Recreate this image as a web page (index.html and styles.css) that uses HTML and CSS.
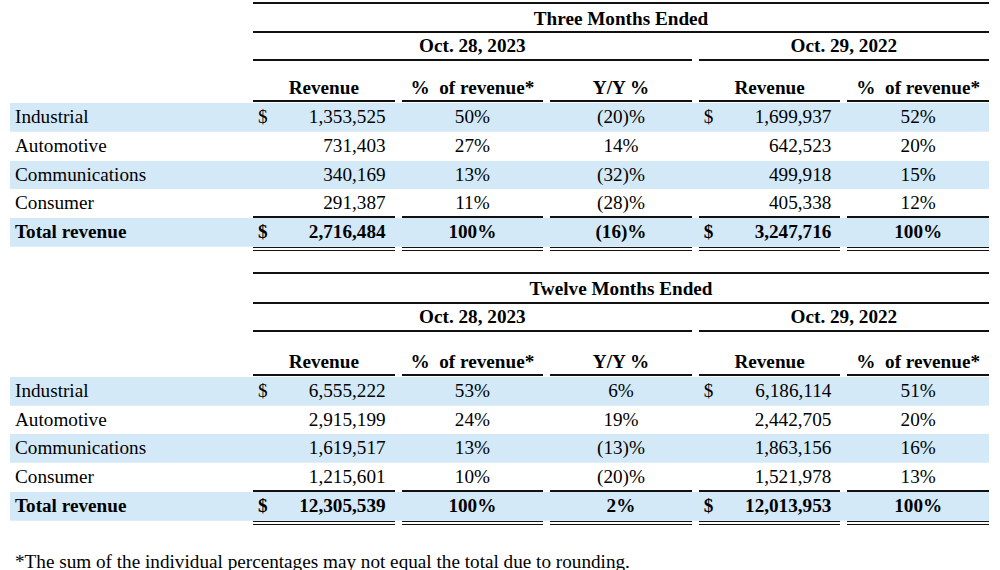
FILE: index.html
```html
<!DOCTYPE html>
<html lang="en">
<head>
<meta charset="utf-8">
<title>Revenue by End Market</title>
<link rel="stylesheet" href="styles.css">
</head>
<body>
<div class="sheet">
  <section class="block first">
    <div class="band"><div class="spacer"></div><div class="title">Three Months Ended</div></div>
    <div class="band"><div class="spacer"></div><div class="period p3">Oct. 28, 2023</div><div class="period p2">Oct. 29, 2022</div></div>
    <div class="band heads">
      <div class="spacer"></div>
      <div class="hd">Revenue</div><div class="hd">%&nbsp;&nbsp;of revenue*</div><div class="hd">Y/Y %</div><div class="hd">Revenue</div><div class="hd">%&nbsp;&nbsp;of revenue*</div>
    </div>
    <div class="rows">
      <div class="row alt"><div class="lbl">Industrial</div><div class="c money"><span>$</span><span>1,353,525</span></div><div class="c pct">50%</div><div class="c pct">(20)%</div><div class="c money"><span>$</span><span>1,699,937</span></div><div class="c pct">52%</div></div>
      <div class="row"><div class="lbl">Automotive</div><div class="c money"><span></span><span>731,403</span></div><div class="c pct">27%</div><div class="c pct">14%</div><div class="c money"><span></span><span>642,523</span></div><div class="c pct">20%</div></div>
      <div class="row alt"><div class="lbl">Communications</div><div class="c money"><span></span><span>340,169</span></div><div class="c pct">13%</div><div class="c pct">(32)%</div><div class="c money"><span></span><span>499,918</span></div><div class="c pct">15%</div></div>
      <div class="row under"><div class="lbl">Consumer</div><div class="c money"><span></span><span>291,387</span></div><div class="c pct">11%</div><div class="c pct">(28)%</div><div class="c money"><span></span><span>405,338</span></div><div class="c pct">12%</div></div>
      <div class="row total"><div class="lbl">Total revenue</div><div class="c money"><span>$</span><span>2,716,484</span></div><div class="c pct">100%</div><div class="c pct">(16)%</div><div class="c money"><span>$</span><span>3,247,716</span></div><div class="c pct">100%</div></div>
    </div>
  </section>

  <section class="block second">
    <div class="band"><div class="spacer"></div><div class="title">Twelve Months Ended</div></div>
    <div class="band"><div class="spacer"></div><div class="period p3">Oct. 28, 2023</div><div class="period p2">Oct. 29, 2022</div></div>
    <div class="band heads">
      <div class="spacer"></div>
      <div class="hd">Revenue</div><div class="hd">%&nbsp;&nbsp;of revenue*</div><div class="hd">Y/Y %</div><div class="hd">Revenue</div><div class="hd">%&nbsp;&nbsp;of revenue*</div>
    </div>
    <div class="rows">
      <div class="row alt"><div class="lbl">Industrial</div><div class="c money"><span>$</span><span>6,555,222</span></div><div class="c pct">53%</div><div class="c pct">6%</div><div class="c money"><span>$</span><span>6,186,114</span></div><div class="c pct">51%</div></div>
      <div class="row"><div class="lbl">Automotive</div><div class="c money"><span></span><span>2,915,199</span></div><div class="c pct">24%</div><div class="c pct">19%</div><div class="c money"><span></span><span>2,442,705</span></div><div class="c pct">20%</div></div>
      <div class="row alt"><div class="lbl">Communications</div><div class="c money"><span></span><span>1,619,517</span></div><div class="c pct">13%</div><div class="c pct">(13)%</div><div class="c money"><span></span><span>1,863,156</span></div><div class="c pct">16%</div></div>
      <div class="row under"><div class="lbl">Consumer</div><div class="c money"><span></span><span>1,215,601</span></div><div class="c pct">10%</div><div class="c pct">(20)%</div><div class="c money"><span></span><span>1,521,978</span></div><div class="c pct">13%</div></div>
      <div class="row total"><div class="lbl">Total revenue</div><div class="c money"><span>$</span><span>12,305,539</span></div><div class="c pct">100%</div><div class="c pct">2%</div><div class="c money"><span>$</span><span>12,013,953</span></div><div class="c pct">100%</div></div>
    </div>
  </section>

  <p class="note">*The sum of the individual percentages may not equal the total due to rounding.</p>
</div>
</body>
</html>
```

FILE: styles.css
```css
html, body {
  margin: 0;
  padding: 0;
  background: #ffffff;
}

body {
  font-family: "Liberation Serif", "Times New Roman", serif;
  font-size: 19.2px;
  color: #000000;
  overflow: hidden;
}

.sheet {
  width: 979px;
  padding: 2px 0 0 10px;
}

.band {
  display: flex;
}

.spacer {
  width: 236px;
  flex: none;
}

.title {
  margin-left: 7px;
  width: 736px;
  border-top: 2px solid #111;
  border-bottom: 2px solid #111;
  padding-top: 2px;
  height: 25px;
  line-height: 25px;
  text-align: center;
  font-weight: bold;
}

.period {
  margin-left: 7px;
  height: 26px;
  line-height: 26px;
  border-bottom: 2px solid #111;
  text-align: center;
  font-weight: bold;
}

.p3 { width: 438.8px; }
.p2 { width: 290.2px; }

.hd {
  margin-left: 7px;
  width: 141.6px;
  flex: none;
  padding-top: 14px;
  height: 25px;
  line-height: 25px;
  border-bottom: 2px solid #111;
  text-align: center;
  font-weight: bold;
  white-space: nowrap;
}

.rows {
  margin-top: 1px;
}

.row {
  display: flex;
  height: 28.75px;
  box-sizing: border-box;
}

.row.alt,
.row.total {
  background: linear-gradient(#d3e9f8, #d3e9f8) top left / 100% 28.75px no-repeat;
}

.lbl {
  width: 231px;
  padding-left: 5px;
  flex: none;
  line-height: 28px;
  white-space: nowrap;
}

.c {
  margin-left: 7px;
  width: 141.6px;
  flex: none;
  box-sizing: border-box;
  line-height: 27px;
  white-space: nowrap;
}

.money {
  display: flex;
  justify-content: space-between;
  padding: 0 9px 0 5px;
}

.pct {
  text-align: center;
}

.row.under .c {
  border-bottom: 2px solid #111;
}

.row.total {
  height: 32.75px;
  font-weight: bold;
}

.row.total .c {
  border-bottom: 4px double #111;
}

.second {
  margin-top: 21px;
}

.second .title {
  height: 26px;
  line-height: 25px;
}

.second .hd {
  padding-top: 17px;
}

.note {
  margin: 25px 0 0 5px;
  line-height: 24px;
  white-space: nowrap;
}
```
